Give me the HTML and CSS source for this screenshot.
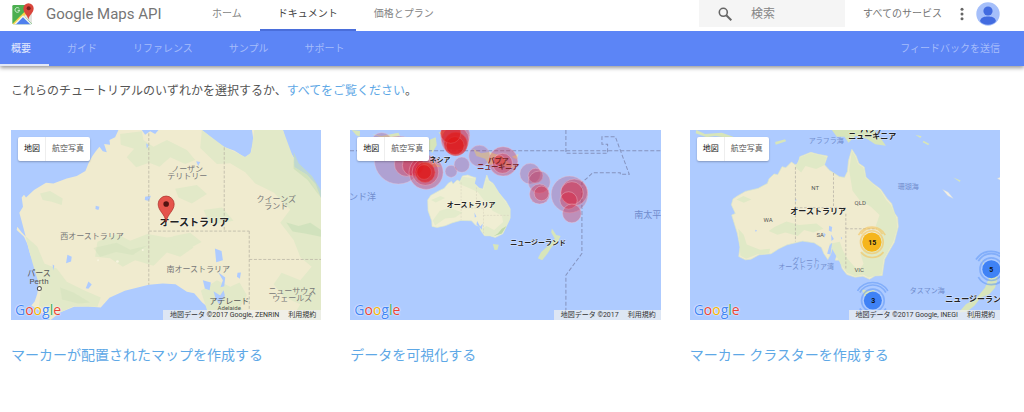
FILE: index.html
```html
<!DOCTYPE html>
<html lang="ja">
<head>
<meta charset="utf-8">
<meta name="viewport" content="width=device-width, initial-scale=1">
<title>Google Maps API</title>
<link rel="stylesheet" href="styles.css">
</head>
<body>
<header class="header">
  <div class="topbar">
    <a class="brand" href="#">
      <svg class="brand-logo" viewBox="0 0 66 66" aria-hidden="true">
        <clipPath id="tile"><rect x="1" y="6" width="59" height="58" rx="4"/></clipPath>
        <g clip-path="url(#tile)">
          <path fill="#4caf50" d="M0 0h66v66H0z"/>
          <path fill="#f7d449" d="M0 64 60 4v16L14 66z"/>
          <path fill="#e4e4e0" d="M36 40 62 14v50z"/>
          <path fill="#f4f4f2" d="M4 66 33 37l29 29z"/>
          <path fill="#4f80ed" d="M10 66 33 43l24 23z"/>
        </g>
        <path fill="none" stroke="#d9f2da" stroke-width="3" d="M22 17a7 7 0 1 0 1 5h-6"/>
        <path fill="#d9453b" d="M49 50C47 36 34 31 34 16a15 15 0 0 1 31 0c0 15-14 20-16 34z"/>
        <circle cx="50" cy="16" r="6" fill="#7c211c"/>
      </svg>
      <span>Google Maps API</span>
    </a>
    <nav class="tabs" aria-label="メイン">
      <a href="#">ホーム</a>
      <a class="current" href="#">ドキュメント</a>
      <a href="#">価格とプラン</a>
    </nav>
    <div class="tools">
      <label class="search">
        <svg viewBox="0 0 14 14" aria-hidden="true"><circle cx="5.3" cy="5.3" r="4" fill="none" stroke="#666" stroke-width="1.6"/><path d="m8.3 8.3 5 5" stroke="#666" stroke-width="2"/></svg>
        <input type="search" placeholder="検索" aria-label="検索">
      </label>
      <a class="services" href="#">すべてのサービス</a>
      <button class="more" type="button" aria-label="その他">
        <svg viewBox="0 0 4 14" aria-hidden="true"><g fill="#666"><circle cx="2" cy="2.2" r="1.5"/><circle cx="2" cy="7" r="1.5"/><circle cx="2" cy="11.8" r="1.5"/></g></svg>
      </button>
      <button class="avatar" type="button" aria-label="アカウント">
        <svg viewBox="0 0 24 24" aria-hidden="true"><clipPath id="face"><circle cx="12" cy="12" r="11.7"/></clipPath><g clip-path="url(#face)"><path fill="#a5bffa" d="M0 0h24v24H0z"/><g fill="#426be0"><circle cx="12" cy="9" r="4.6"/><path d="M4 19c1-4 5-4.500 8-4.500s7 .5 8 4.500c-3 5-13 5-16 0z"/></g></g></svg>
      </button>
    </div>
  </div>
  <div class="subbar">
    <nav class="subtabs" aria-label="ドキュメント">
      <a class="current" href="#">概要</a>
      <a href="#">ガイド</a>
      <a href="#">リファレンス</a>
      <a href="#">サンプル</a>
      <a href="#">サポート</a>
    </nav>
    <a class="feedback" href="#">フィードバックを送信</a>
  </div>
</header>

<main class="content">
  <p class="intro">これらのチュートリアルのいずれかを選択するか、<a href="#">すべてをご覧ください</a>。</p>
  <div class="cards">
    <article class="card">
      <div class="map">
        <svg class="map-art" viewBox="0 0 310 190" preserveAspectRatio="xMidYMid slice" role="img" aria-label="マーカー付きのオーストラリアの地図">
          <g transform="scale(.33333) translate(-33 -30)">
            <path fill="#f0ebcf" d="M355 30 345 52 328 60 330 74 312 72 320 97 308 94 298 80 287 94 277 108 266 128 256 153 230 168 200 175 160 190 138 188 102 210 78 232 72 224 65 232 69 260 58 278 64 300 77 349 66 338 52 320 50 330 72 350 82 372 90 402 101 430 116 478 112 520 104 544 94 556 119 572 151 600 180 577 222 560 264 559 302 562 328 533 374 512 446 494 488 490 526 492 560 515 582 519 606 547 628 565 632 600H963V236L946 192 920 164 881 141 882 115 862 84 848 30H755L760 63 750 102 733 112 703 92 670 80 645 62 605 30H475L465 42 450 34 435 44 425 30z"/>
            <g fill="#e2e9c8">
              <path d="M360 42 425 34 430 60 460 80 500 60 560 90 585 120 555 132 510 112 478 140 447 128 408 142 380 112 402 86 362 74z"/>
              <path d="M120 220 150 213 188 235 185 255 155 245 128 240zM292 365 350 342 390 362 442 342 500 352 542 346 580 382 540 410 500 397 460 437 405 420 368 440 330 414 285 410z"/>
              <path d="M76 348 112 380 133 430 170 445 200 485 252 510 302 532 292 560 220 558 150 590 116 568 122 510 98 430z"/>
              <path d="M525 206 590 195 620 222 575 250 535 232zM610 270 665 262 700 302 630 315zM520 348 570 338 604 366 555 392 510 376z"/>
              <path d="M605 30 672 80 735 111 752 98 762 30H848L880 116 883 142 920 165 963 238V600H872L900 552 850 530 820 492 844 458 900 480 934 440 900 411 880 360 840 308 870 268 820 217 765 190 735 157 690 130 650 132 600 84z"/>
              <path d="M602 512 650 480 690 500 718 487 740 525 720 560 748 600H630z"/>
            </g>
            <g fill="#c7dfb7"><path d="M858 307 895 318 930 308 963 330V350L914 340 877 334zM880 95 895 130 935 168 963 212V235L922 180 880 146z" opacity=".65"/><path d="M280 384 350 368 390 389 440 377 398 405 348 396 300 410zM180 502 222 518 270 547 235 550 186 538z" opacity=".3"/></g>
            <g fill="#aecbff">
              <path d="M435 230 452 227 447 243 434 240zM287 257l11 3-3 10-9-3zM202 404l13 6-2 14-15 5zM265 484l10 9-10 13-8-2zM158 433l5 4-4 14zM438 70l8 6-6 10zM588 124l12 2-6 12z"/>
              <path d="M644 385 664 393 668 420 648 426zM654 456 675 472 672 498 661 501 668 480zM608 480 632 487 628 510 614 505zM712 458 722 457 719 476 710 470zM640 513 660 526 670 510 674 526 657 553 646 535z"/>
            </g>
            <path fill="none" stroke="#bdb8a7" stroke-width="2.500" stroke-dasharray="9 5" d="M446 40V494M446 333H747M672 82V333M747 333V590M747 418H963"/>
            <g fill="#f7f4df"><circle cx="352" cy="424" r="4"/><circle cx="428" cy="390" r="3"/><circle cx="294" cy="420" r="3"/></g>
            <circle cx="118" cy="505" r="6" fill="#fff" stroke="#555" stroke-width="3"/>
          </g>
          <g class="place" text-anchor="middle">
            <text x="81" y="109">西オーストラリア</text>
            <text x="176" y="42">ノーザン</text><text x="176" y="49">テリトリー</text>
            <text x="265" y="72">クイーンズ</text><text x="265" y="79">ランド</text>
            <text x="187" y="142">南オーストラリア</text>
            <text x="281" y="164">ニューサウス</text><text x="281" y="171">ウェールズ</text>
          </g>
          <g class="city" text-anchor="middle"><text x="28" y="146">パース</text><text x="28" y="154">Perth</text><text x="218" y="174">アデレード</text><text class="small" x="218" y="180">Adelaide</text></g>
          <text class="country country-l" x="183" y="96" text-anchor="middle">オーストラリア</text>
          <path fill="#e5544b" stroke="#a92d28" stroke-width=".7" d="M155 92c-1-8-8-11-8-18a8 8 0 0 1 16 0c0 7-7 10-8 18z"/><circle cx="155" cy="74" r="2.800" fill="#531411"/>
        </svg>
        <div class="map-types"><button type="button" class="on">地図</button><button type="button">航空写真</button></div>
        <div class="google" aria-label="Google"><span class="b">G</span><span class="r">o</span><span class="y">o</span><span class="b">g</span><span class="g">l</span><span class="r">e</span></div>
        <div class="credit"><span>地図データ ©2017 Google, ZENRIN</span><a href="#">利用規約</a></div>
      </div>
      <h2><a href="#">マーカーが配置されたマップを作成する</a></h2>
    </article>

    <article class="card">
      <div class="map">
        <svg class="map-art" viewBox="0 0 310 190" preserveAspectRatio="xMidYMid slice" role="img" aria-label="円でデータを示した地図">
          <g transform="scale(.33333) translate(-15 -30)">
            <g fill="#d7e5ba">
              <path d="M20 30 45 33 44 50 34 46zM80 42 110 48 160 38 165 48 120 56zM252 60 272 52 275 75 262 98 252 90zM210 125 270 128 288 140 240 142zM280 38 300 30 295 50z"/>
              <path d="M384 86 408 100 432 96 470 108 490 128 512 144 478 140 458 130 432 135 420 116 394 108zM500 110 520 102 514 118z"/>
              <path d="M620 325 633 345 646 348 638 366 620 380 607 400 591 420 578 414 588 396 612 374 629 356 618 337zM443 372 461 374 457 389 448 390z"/>
            </g>
            <path fill="#f0eed3" stroke="#e0eac8" stroke-width="2" d="M248 240 257 226 284 211 297 205 309 190 319 184 324 192 336 180 345 184 352 168 368 165 381 170 392 173 388 190 402 204 413 207 418 189 425 165 431 181 444 190 449 208 464 222 483 244 495 266 495 294 484 318 473 341 450 352 435 347 418 347 408 333 403 319 391 315 379 302 347 301 322 308 300 317 276 322 261 319 260 303 249 272z"/>
            <path fill="#e3ebcb" d="M341 191 352 170 391 175 388 191 404 207 415 208 425 170 431 185 447 193 466 224 495 267 493 300 471 340 446 350 419 345 406 327 424 318 447 330 474 306 470 286 442 272 432 250 415 239 398 216 370 203zM284 272 315 264 352 277 330 292 300 295 270 316 263 301zM258 240 286 228 300 234 272 247z"/>
            <path fill="#bfd9a8" d="m446 348 24-8 14-22-14 8-12 14z"/>
            <path fill="#aecbff" d="m388 277 6 13-5 2zM396 303l9 16 8-9-3 18-16-15z"/>
            <path fill="none" stroke="#d3cfba" stroke-width="1.500" stroke-dasharray="6 4" d="M348 187V299M348 264H415M394 202V265M415 265V340M415 286H492"/>
            <path fill="none" stroke="#8593be" stroke-width="3" stroke-dasharray="12 6" d="M15 92H945M662 30V100H787V73H770V50H810L852 163H825V158H743L710 188V400L662 465V600"/>
            <g class="quakes">
              <circle class="weak" cx="160" cy="120" r="72"/><circle class="weak" cx="110" cy="70" r="32"/><circle cx="185" cy="132" r="37"/><circle cx="204" cy="136" r="32"/>
              <circle cx="243" cy="157" r="51"/><circle cx="241" cy="156" r="40"/><circle class="strong" cx="240" cy="157" r="30"/><circle class="strong" cx="237" cy="156" r="22"/>
              <circle cx="330" cy="46" r="44"/><circle cx="330" cy="60" r="42"/><circle class="strong" cx="332" cy="72" r="35"/><circle class="strong" cx="330" cy="77" r="27"/><circle class="strong" cx="317" cy="40" r="30"/>
              <circle class="weak" cx="318" cy="154" r="18"/><circle class="weak" cx="350" cy="134" r="23"/><circle class="weak" cx="403" cy="108" r="32"/>
              <circle cx="474" cy="124" r="44"/><circle cx="472" cy="130" r="30"/><circle cx="462" cy="122" r="17"/>
              <circle class="weak" cx="555" cy="161" r="31"/><circle cx="571" cy="167" r="22"/><circle class="weak" cx="582" cy="186" r="33"/><circle cx="583" cy="222" r="30"/><circle cx="589" cy="220" r="22"/>
              <circle class="weak" cx="673" cy="223" r="55"/><circle cx="687" cy="217" r="40"/><circle cx="680" cy="219" r="34"/><circle cx="670" cy="241" r="26"/><circle cx="680" cy="280" r="28"/>
            </g>
          </g>
          <g class="sea sea-l"><text x="-1" y="70">ンド洋</text><text x="284" y="88">南太平</text></g>
          <g class="country country-s" text-anchor="middle"><text x="121" y="77">オーストラリア</text><text x="188" y="115">ニュージーランド</text><text x="90" y="32">ネシア</text></g>
          <g class="country country-s papua" text-anchor="middle"><text x="148" y="33">パプア</text><text x="148" y="39">ニューギニア</text></g>
        </svg>
        <div class="map-types"><button type="button" class="on">地図</button><button type="button">航空写真</button></div>
        <div class="google" aria-label="Google"><span class="b">G</span><span class="r">o</span><span class="y">o</span><span class="b">g</span><span class="g">l</span><span class="r">e</span></div>
        <div class="credit"><span>地図データ ©2017</span><a href="#">利用規約</a></div>
      </div>
      <h2><a href="#">データを可視化する</a></h2>
    </article>

    <article class="card">
      <div class="map">
        <svg class="map-art" viewBox="0 0 310 190" preserveAspectRatio="xMidYMid slice" role="img" aria-label="マーカー クラスターの地図">
          <g transform="scale(.33333) translate(-15 -30)">
            <path fill="#d7e5ba" d="M34 30 60 42 110 38 145 50 135 54 90 48 65 52 32 40zM270 66 300 58 303 64 272 74zM440 30H570L575 48 590 60 602 77 570 73 545 56 510 48 490 68 478 50 455 50zM715 62l18 10-5 3-16-8zM690 44l19 5-4 5zM804 172l22 9-3 5z"/>
            <path fill="#f0ebcf" stroke="#dfe8c4" stroke-width="2" d="M144 237 155 229 181 214 219 205 247 190 252 176 267 162 278 164 291 140 302 143 319 126 330 134 340 132 344 110 359 104 377 97 399 103 427 108 418 134 433 151 463 170 478 172 487 154 490 122 500 88 513 108 521 130 537 141 542 171 563 190 586 207 606 236 619 250 628 279 637 292 639 320 627 367 610 396 598 418 594 445 591 466 570 467 553 477 533 468 510 471 485 463 471 445 464 420 450 420 457 401 455 386 443 376 437 401 428 418 416 400 409 382 387 368 352 363 306 374 281 386 258 401 222 404 198 417 181 419 161 409 165 381 157 340 140 285 151 280 139 254z"/>
            <path fill="#e0e9c6" d="M345 112 377 99 424 110 417 136 393 147 361 138 348 157 330 141zM492 151 500 92 511 110 519 133 535 143 541 172 565 194 586 211 603 240 617 255 634 294 636 325 624 366 595 418 589 462 550 472 519 455 535 431 526 402 548 373 582 368 588 344 572 317 583 285 557 260 523 240 502 212zM268 321 304 304 342 315 394 310 415 326 384 337 357 330 338 348 301 337 277 344 251 333zM154 238 175 228 199 238 176 248zM160 326 176 344 185 373 225 389 255 386 252 400 218 402 183 416 166 407zM432 371 464 365 473 390 487 416 507 438 535 463 510 468 485 458 469 435z"/>
            <path fill="#aecbff" d="m432 317 9 4-2 15-8-5zM438 343l8 14-7 6zM415 337l7 6-5 10zM210 329l6 2-4 5zM330 236l5 3-4 6zM467 350l4 4-3 4zM426 401l7-25 8-8-5 35z"/>
            <path fill="none" stroke="#bab6aa" stroke-width="2.500" stroke-dasharray="8 5" d="M331 141V364M445 159V263M482 281V448M331 263H482M482 326H575"/>
            <path fill="#f5efe4" stroke="#ccdce0" stroke-width="1" d="m772 208 16 8 16 19-16-8zM936 175l10-4v10z"/>
            <path fill="#d8e5bb" d="M530 507 550 513 569 508 563 537 549 545 537 526zM884 413l14 20 18 5 9 25 13 9-9 31-17 19-26 11-18 23-23 19-25 2 22-25 31-18 26-31 14-34zM842 585l36-2-17 13z"/>
            <g fill="none" stroke-width="5">
              <g stroke="#f5c45c" opacity=".6"><path d="M520 345a45 45 0 0 1 80 0M528 342a38 38 0 0 1 64 0M527 396a44 44 0 0 0 68 0"/><circle cx="560" cy="366" r="34"/></g>
              <g stroke="#5792f7" opacity=".5"><circle cx="918" cy="447" r="34"/><path d="M879 423a45 45 0 0 1 78 0M879 471a45 45 0 0 0 78 0M872 418a55 55 0 0 1 91 0"/><circle cx="563" cy="541" r="34"/><path d="M524 517a45 45 0 0 1 78 0M517 512a54 54 0 0 1 91 0M524 565a45 45 0 0 0 78 0"/></g>
            </g>
            <circle cx="560" cy="366" r="29" fill="#f5b51c"/><circle cx="918" cy="447" r="27" fill="#3f82f5"/><circle cx="563" cy="541" r="27" fill="#3f82f5"/>
          </g>
          <g class="sea" text-anchor="middle"><text x="136" y="13">アラフラ海</text><text x="218" y="59">珊瑚海</text><text x="237" y="163">タスマン海</text><text x="116" y="133">グレート</text><text x="116" y="139">オーストラリア湾</text></g>
          <g class="region" text-anchor="middle"><text x="125" y="60">NT</text><text x="170" y="75">QLD</text><text x="78" y="92">WA</text><text x="130" y="107">SA</text><text x="169" y="142">VIC</text></g>
          <g class="country"><text x="128" y="84" text-anchor="middle">オーストラリア</text><text x="182" y="2" text-anchor="middle">パプア</text><text x="182" y="9" text-anchor="middle">ニューギニア</text><text x="255" y="172">ニュージーラン</text></g>
          <g class="count" text-anchor="middle"><text x="182" y="115">15</text><text x="301" y="142">5</text><text x="183" y="173">3</text></g>
        </svg>
        <div class="map-types"><button type="button" class="on">地図</button><button type="button">航空写真</button></div>
        <div class="google" aria-label="Google"><span class="b">G</span><span class="r">o</span><span class="y">o</span><span class="b">g</span><span class="g">l</span><span class="r">e</span></div>
        <div class="credit"><span>地図データ ©2017 Google, INEGI</span><a href="#">利用規約</a></div>
      </div>
      <h2><a href="#">マーカー クラスターを作成する</a></h2>
    </article>
  </div>
</main>
</body>
</html>
```
FILE: styles.css
```css
* { box-sizing: border-box; }

body {
  margin: 0;
  background: #fff;
  color: #555;
  font: 10px/16px Roboto, "Noto Sans CJK JP", sans-serif;
}

a { color: inherit; text-decoration: none; }

button {
  margin: 0;
  padding: 0;
  border: 0;
  background: none;
  color: inherit;
  font: inherit;
  cursor: pointer;
}

svg { display: block; }

/* Header */
.header { box-shadow: 0 2px 4px rgba(0, 0, 0, .4); }

.topbar {
  display: flex;
  height: 31px;
  padding: 0 24px 0 12px;
}

.brand {
  display: flex;
  align-items: center;
  gap: 12px;
  width: 182px;
  padding-bottom: 4px;
  color: #757575;
  font-size: 15px;
  white-space: nowrap;
}

.brand-logo { width: 22px; height: 22px; }

.tabs, .subtabs { display: flex; white-space: nowrap; }

.tabs a {
  padding: 6px 18px 7px;
  border-bottom: 2px solid transparent;
  color: #858585;
}

.tabs .current { border-color: #4a6edb; color: #444; }

.tools {
  display: flex;
  align-items: center;
  height: 27px;
  margin-left: auto;
  color: #757575;
  white-space: nowrap;
}

.search {
  display: flex;
  align-items: center;
  align-self: stretch;
  gap: 19px;
  width: 146px;
  margin-right: 18px;
  padding-left: 19px;
  background: #f5f5f5;
}

.search svg { flex: none; width: 14px; height: 14px; }

.search input {
  min-width: 0;
  flex: 1;
  padding: 0;
  border: 0;
  outline: 0;
  background: none;
  color: #555;
  font: inherit;
  font-size: 12px;
}

.search input::placeholder { color: #858585; opacity: 1; }

.more { margin: 0 12px 0 18px; }
.more svg { width: 4px; height: 14px; }
.avatar svg { width: 24px; height: 24px; }

.subbar {
  display: flex;
  align-items: center;
  justify-content: space-between;
  height: 35px;
  padding-right: 24px;
  background: #5c85f6;
  color: #a5bcfb;
}

.subtabs a {
  padding: 10px 18px 7px;
  border-bottom: 2px solid transparent;
}

.subtabs a:first-child { padding-left: 11px; }
.subtabs .current { border-color: #e1e7f6; color: #e3eafd; }

/* Tutorials */
.content { padding: 16px 24px 16px 11px; }

.intro {
  margin: 0 0 30px;
  font-size: 12px;
  line-height: 18px;
}

.intro a, .card h2 { color: #5ea8e6; }

.cards {
  display: grid;
  grid-template-columns: repeat(3, minmax(0, 1fr));
  gap: 29px;
}

.card h2 {
  margin: 25px 0 0;
  font-size: 14px;
  font-weight: 400;
  line-height: 20px;
}

/* Maps */
.map {
  position: relative;
  overflow: hidden;
  background: #aecbff;
}

.map-art { width: 100%; height: auto; }

.map-types {
  position: absolute;
  top: 7px;
  left: 7px;
  display: flex;
  border-radius: 2px;
  background: #fff;
  box-shadow: 0 1px 2px rgba(0, 0, 0, .25);
  color: #555;
  font-size: 8px;
  line-height: 24px;
}

.map-types button { padding: 0 6px; }
.map-types .on { padding-right: 5px; border-right: 1px solid #eee; color: #111; }

.google {
  position: absolute;
  bottom: 1px;
  left: 4px;
  display: flex;
  font: 500 15px/18px "Open Sans", Roboto, sans-serif;
  font-size: 14px;
  text-shadow: 0 0 1px #fff, 0 0 2px #fff;
}

.b { color: #4285f4; }
.r { color: #ea4335; }
.y { color: #f4b400; }
.g { color: #34a853; }

.credit {
  position: absolute;
  right: 0;
  bottom: 0;
  display: flex;
  gap: 9px;
  padding: 0 5px 0 7px;
  background: rgba(240, 240, 240, .72);
  color: #333;
  font-size: 7px;
  line-height: 10px;
}

.place { fill: #777; font-size: 8px; }
.city { fill: #555; font-size: 8px; }
.city .small { font-size: 6px; }
.region { fill: #555; font-size: 6px; }
.sea { fill: #718dce; font-size: 7px; }
.sea-l { font-size: 9px; }

.country {
  fill: #222;
  stroke: #fff;
  stroke-opacity: .5;
  stroke-width: 1px;
  paint-order: stroke;
  font-size: 8px;
  font-weight: 700;
}

.country-l { font-size: 10px; }
.country-s { font-size: 7px; }
.papua { fill: #7c2525; stroke: none; }
.count { fill: #111; font-size: 7px; font-weight: 700; }

.quakes circle { fill: #dc1c35; fill-opacity: .34; stroke: #f0c5d2; stroke-width: 2px; stroke-opacity: .6; }
.quakes .weak { fill: #b3355c; fill-opacity: .28; }
.quakes .strong { fill: #e01515; fill-opacity: .6; stroke: #e76b6b; }
```
